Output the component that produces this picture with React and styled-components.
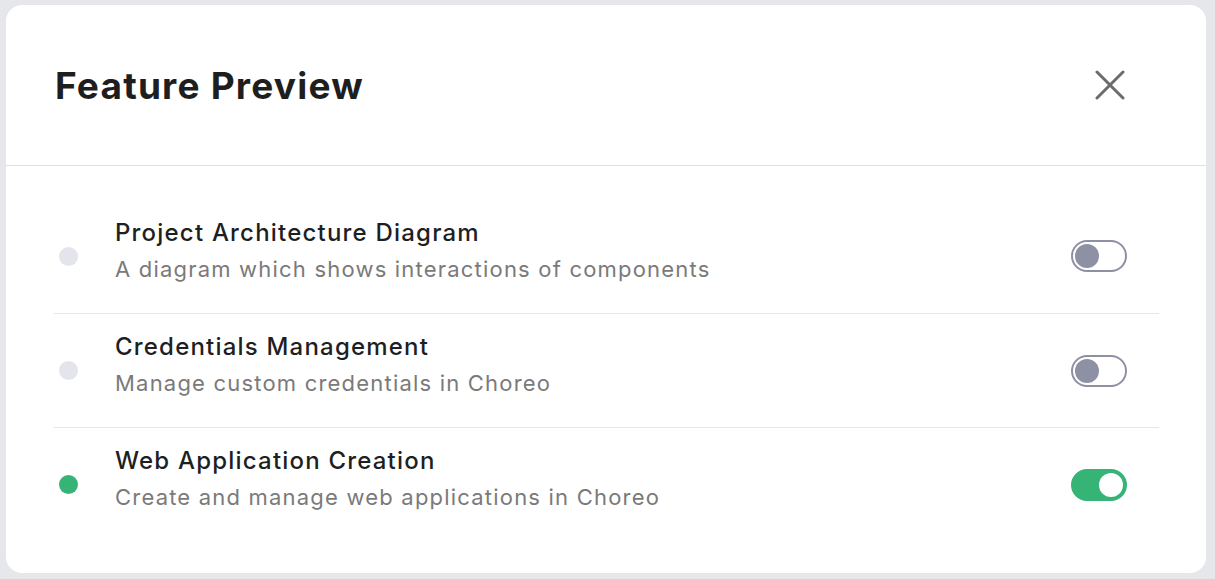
import React, { useState } from "react";
import styled, { createGlobalStyle } from "styled-components";

const Global = createGlobalStyle`
  html, body { margin: 0; padding: 0; }
  body {
    background: #e6e7eb;
    font-family: Inter, "Noto Sans", sans-serif;
    -webkit-font-smoothing: antialiased;
  }
`;

const Page = styled.div`
  padding: 5px 9px 6px 6px;
`;

const Card = styled.div`
  width: 1200px;
  height: 568px;
  box-sizing: border-box;
  background: #ffffff;
  border-radius: 16px;
  overflow: hidden;
  display: flex;
  flex-direction: column;
`;

const Header = styled.div`
  height: 160px;
  display: flex;
  align-items: center;
  justify-content: space-between;
  padding: 0 80px 0 49px;
  border-bottom: 1px solid #e0e0e2;
`;

const Title = styled.h1`
  margin: 0;
  font-size: 37px;
  font-weight: 700;
  color: #1e1e1e;
  letter-spacing: 1.2px;
`;

const CloseButton = styled.button`
  width: 32px;
  height: 32px;
  padding: 0;
  border: none;
  background: transparent;
  display: flex;
  align-items: center;
  justify-content: center;
  cursor: pointer;
`;

const List = styled.div`
  padding: 33px 47px 32px 48px;
  display: flex;
  flex-direction: column;
`;

const Row = styled.div`
  height: 114px;
  box-sizing: border-box;
  display: flex;
  align-items: center;
  padding: 0 32px 0 5px;
  border-top: ${(p) => (p.$first ? "none" : "1px solid #e6e6ea")};
`;

const Dot = styled.span`
  width: 19px;
  height: 19px;
  border-radius: 50%;
  flex-shrink: 0;
  background: ${(p) => (p.$on ? "#36b475" : "#e4e5ec")};
  margin-right: 37px;
`;

const Texts = styled.div`
  flex: 1;
  display: flex;
  flex-direction: column;
  padding-bottom: 11px;
`;

const ItemTitle = styled.div`
  font-size: 24px;
  line-height: 34px;
  font-weight: 500;
  color: #1f1f1f;
  letter-spacing: 1.2px;
`;

const ItemDesc = styled.div`
  margin-top: 2px;
  font-size: 22px;
  line-height: 34px;
  font-weight: 400;
  color: #7a7a7a;
  letter-spacing: 1.2px;
`;

const Switch = styled.button`
  width: 56px;
  height: 32px;
  box-sizing: border-box;
  border-radius: 16px;
  flex-shrink: 0;
  cursor: pointer;
  display: flex;
  align-items: center;
  border: 2px solid ${(p) => (p.$on ? "#36b475" : "#8e90a4")};
  background: ${(p) => (p.$on ? "#36b475" : "#ffffff")};
  justify-content: ${(p) => (p.$on ? "flex-end" : "flex-start")};
  padding: 0 2px;
`;

const Thumb = styled.span`
  width: 24px;
  height: 24px;
  border-radius: 50%;
  background: ${(p) => (p.$on ? "#ffffff" : "#8e90a4")};
`;

const features = [
  {
    title: "Project Architecture Diagram",
    desc: "A diagram which shows interactions of components",
    on: false,
  },
  {
    title: "Credentials Management",
    desc: "Manage custom credentials in Choreo",
    on: false,
  },
  {
    title: "Web Application Creation",
    desc: "Create and manage web applications in Choreo",
    on: true,
  },
];

export default function App() {
  const [state, setState] = useState(features.map((f) => f.on));
  return (
    <>
      <Global />
      <Page>
        <Card>
          <Header>
            <Title>Feature Preview</Title>
            <CloseButton aria-label="Close">
              <svg width="30" height="30" viewBox="0 0 30 30">
                <path
                  d="M2 2 L28 28 M28 2 L2 28"
                  stroke="#6b6b6b"
                  strokeWidth="3"
                  strokeLinecap="round"
                />
              </svg>
            </CloseButton>
          </Header>
          <List>
            {features.map((f, i) => (
              <Row key={f.title} $first={i === 0}>
                <Dot $on={state[i]} />
                <Texts>
                  <ItemTitle>{f.title}</ItemTitle>
                  <ItemDesc>{f.desc}</ItemDesc>
                </Texts>
                <Switch
                  $on={state[i]}
                  onClick={() =>
                    setState((s) => s.map((v, j) => (j === i ? !v : v)))
                  }
                >
                  <Thumb $on={state[i]} />
                </Switch>
              </Row>
            ))}
          </List>
        </Card>
      </Page>
    </>
  );
}
